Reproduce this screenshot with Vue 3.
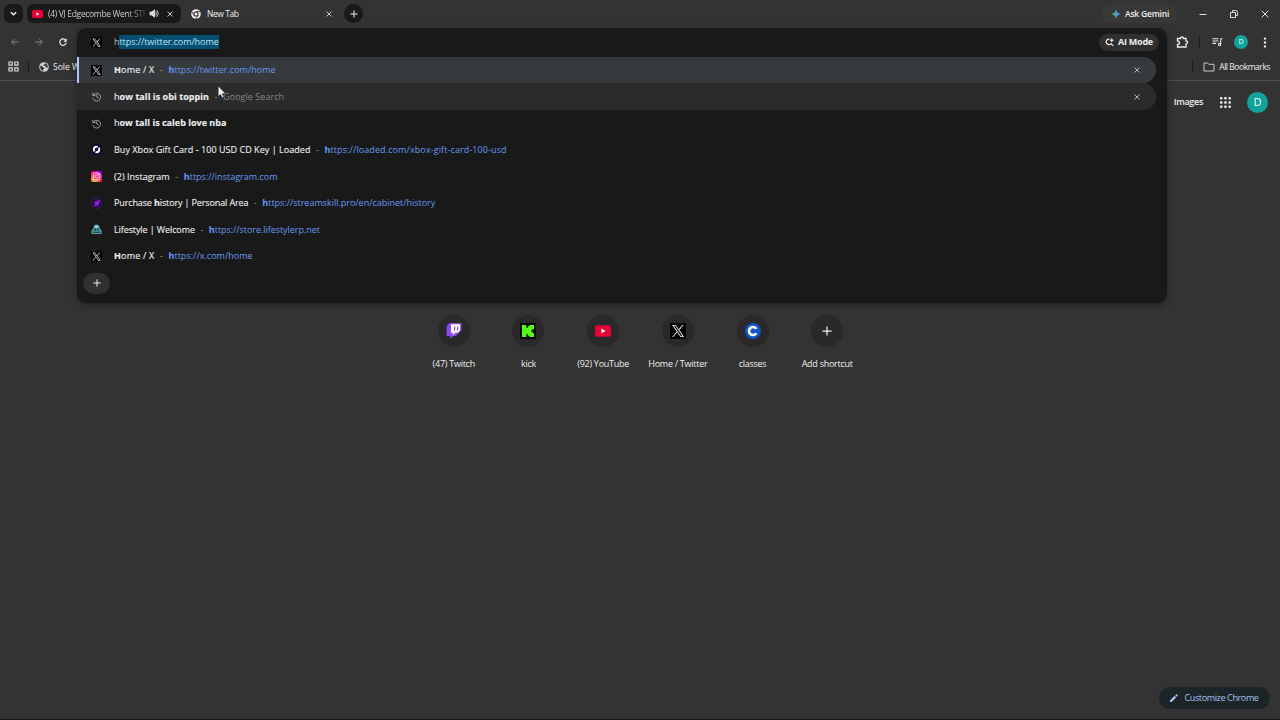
<template>
  <div class="browser">
    <svg class="sprite" aria-hidden="true">
      <symbol id="x" viewBox="0 0 24 24"><path fill="#000" d="M0 0h24v24H0z" /><path fill="#eee" d="M13.9 10.500 20.500 3h-1.700l-5.700 6.500L8.600 3H3.200l6.900 9.900L3.200 21h1.700l6-7.100 4.900 7.100h5.300zM5.700 4.300h2.200l10.800 15.400h-2.200z" /></symbol>
      <symbol id="history" viewBox="0 0 24 24"><path fill="none" stroke="#aaa" stroke-width="2" d="M4 4v6h6M4.6 10a8.5 8.5 0 1 1-.6 5M12.5 7.5V13l4 2.5" /></symbol>
      <symbol id="loaded" viewBox="0 0 24 24"><circle cx="12" cy="12" r="12" fill="#100a35" /><circle cx="12" cy="12" r="6" fill="none" stroke="#fff" stroke-width="4" stroke-dasharray="16.5 2.4" stroke-dashoffset="5" /></symbol>
      <symbol id="instagram" viewBox="0 0 24 24">
        <defs><linearGradient id="ig" x1="0.15" y1="1" x2="0.8" y2="0"><stop offset="0" stop-color="#ffc52e" /><stop offset=".35" stop-color="#ff3b3b" /><stop offset=".7" stop-color="#f00092" /><stop offset="1" stop-color="#b000e8" /></linearGradient></defs>
        <rect width="24" height="24" rx="5" fill="url(#ig)" />
        <rect x="4.5" y="4.5" width="15" height="15" rx="4.5" fill="none" stroke="#fff" stroke-width="2" /><circle cx="12" cy="12" r="3.5" fill="none" stroke="#fff" stroke-width="2" /><circle cx="16.4" cy="7.6" r="1.2" fill="#fff" />
      </symbol>
      <symbol id="streamskill" viewBox="0 0 24 24"><circle cx="12" cy="12" r="11" fill="#220a38" stroke="#5a1890" stroke-width="1.500" /><path fill="#8b22cf" d="m20 3-15 7 4 2.500-3 5 2 1 4-3 2 5 3-6z" /></symbol>
      <symbol id="lifestyle" viewBox="0 0 24 24"><path fill="#4f9fa6" d="M5 10c0-12 14-12 14 0l4 4v8H1v-8z" /><path fill="#b9dde0" d="M8 4h8v3H8z" /><path fill="#142c30" d="M7 11h4v3H7zm6 0h4v3h-4zM4 17h16v2H4z" /></symbol>
      <symbol id="youtube" viewBox="0 0 30 22"><rect width="30" height="22" rx="5" fill="#e80035" /><path fill="#fff" d="m12 6.5 8 4.5-8 4.5z" /></symbol>
      <symbol id="twitch" viewBox="0 0 24 26"><path fill="#8f47f5" d="M5 0 0 5v16h6v5l5-5h4l9-9V0z" /><path fill="#fff" d="M7 2h15v10l-4 4h-4l-4 4v-4H7z" /><path fill="#8f47f5" d="M12 5.5h2V12h-2zm5 0h2V12h-2z" /></symbol>
      <symbol id="kick" viewBox="0 0 24 24"><path fill="#000" d="M0 0h24v24H0z" /><path fill="#53fc18" d="M3 3h6.500v4H12V5h2V3h7v6h-2v2h-2v2h2v2h2v6h-7v-2h-2v-2H9.500v4H3z" /></symbol>
      <symbol id="classes" viewBox="0 0 24 24"><circle cx="12" cy="12" r="12" fill="#0c55c8" /><path fill="none" stroke="#fff" stroke-width="4" d="M17 8.800a6 6 0 1 0 0 6.400" /></symbol>
      <symbol id="plus" viewBox="0 0 24 24"><path fill="none" stroke="#eee" stroke-width="3" d="M12 1v22M1 12h22" /></symbol>
      <symbol id="close" viewBox="0 0 24 24"><path fill="none" stroke="currentColor" stroke-width="3.500" d="m2 2 20 20M22 2 2 22" /></symbol>
      <symbol id="chrome" viewBox="0 0 24 24"><circle cx="12" cy="12" r="11.500" fill="#eee" /><circle cx="12" cy="12" r="5" fill="#eee" stroke="#333" stroke-width="2.500" /><path fill="none" stroke="#333" stroke-width="2" d="M12 6.300h11M7 15 1.500 5.500M17 15l-5.500 9" /></symbol>
      <symbol id="globe" viewBox="0 0 24 24"><circle cx="12" cy="12" r="11.500" fill="#ccc" /><path fill="#333" d="M4 8.500 9 12l3 1v3l-2 1v4C4 20 1.500 14 4 8.500zM14 3v3h-3v3h4l2 4h4c1-4-2-9-7-10z" /></symbol>
      <symbol id="back" viewBox="0 0 24 24"><path fill="none" stroke="#858585" stroke-width="3" d="M23 12H2m10-10L2 12l10 10" /></symbol>
      <symbol id="reload" viewBox="0 0 24 24"><path fill="none" stroke="#eee" stroke-width="3.500" d="M20 7a9.500 9.500 0 1 0 1.500 7" /><path fill="#eee" d="M23 1v10H13z" /></symbol>
    </svg>

    <header class="tabstrip">
      <button class="tab-search"><svg viewBox="0 0 10 10"><path d="m2 3.500 3 3 3-3" /></svg></button>
      <div class="tab inactive">
        <svg class="yt-icon"><use href="#youtube" /></svg>
        <span class="tab-title fade">(4) VJ Edgecombe Went STR</span>
        <svg class="speaker" viewBox="0 0 12 12"><path fill="#ddd" d="M0 4h2.500L6 1v10L2.500 8H0z" /><path d="M7.500 3.500q2 2.500 0 5M9 1.500q4 4.500 0 9" /></svg>
        <svg class="close"><use href="#close" /></svg>
      </div>
      <div class="tab active">
        <svg class="chrome-icon"><use href="#chrome" /></svg>
        <span class="tab-title">New Tab</span>
        <svg class="close"><use href="#close" /></svg>
      </div>
      <button class="new-tab"><svg><use href="#plus" /></svg></button>
      <div class="gemini">
        <svg viewBox="0 0 20 20"><defs><linearGradient id="gm" x1="0" y1=".5" x2="1" y2=".4"><stop offset="0" stop-color="#e7b93c" /><stop offset=".3" stop-color="#4fae72" /><stop offset=".6" stop-color="#4d90f5" /><stop offset="1" stop-color="#7090ff" /></linearGradient></defs><path fill="url(#gm)" d="M10 0q1.500 8.500 10 10-8.500 1.500-10 10Q8.500 11.500 0 10 8.500 8.500 10 0z" /></svg>
        <span>Ask Gemini</span>
      </div>
      <div class="window-buttons">
        <svg viewBox="0 0 10 10"><path d="M1.500 5.500h7" /></svg>
        <svg viewBox="0 0 10 10"><path d="M1.500 3.500h5v5h-5zM3.500 3V1.500h3q2 0 2 2v3H7" /></svg>
        <svg viewBox="0 0 10 10"><path d="m1.700 1.700 6.600 6.600m0-6.600L1.700 8.300" /></svg>
      </div>
    </header>

    <div class="toolbar">
      <svg class="nav"><use href="#back" /></svg>
      <svg class="nav forward"><use href="#back" /></svg>
      <svg class="nav reload"><use href="#reload" /></svg>
      <div class="extensions">
        <svg class="puzzle" viewBox="0 0 24 24"><path d="M3 5h6q0-3 3-3t3 3h5v5q3 0 3 3t-3 3v6H3v-5q4 0 4-3.500T3 10z" /></svg>
        <i class="divider"></i>
        <svg class="media" viewBox="0 0 24 20"><path d="M1 3h13M1 8h13M1 13h8M19 15V3h4" /><circle cx="16.500" cy="15.500" r="2.500" /></svg>
        <span class="avatar small">D</span>
        <svg class="dots" viewBox="0 0 4 14"><circle cx="2" cy="2" r="1.500" /><circle cx="2" cy="7" r="1.500" /><circle cx="2" cy="12" r="1.500" /></svg>
      </div>
    </div>

    <div class="bookmarks">
      <svg class="apps" viewBox="0 0 11 11"><path d="M1 1h3.200v3.200H1zM6.800 1H10v3.200H6.800zM1 6.800h3.200V10H1zM6.800 6.800H10V10H6.800z" /></svg>
      <i class="divider"></i>
      <svg class="globe"><use href="#globe" /></svg>
      <span class="bookmark-name">Sole W</span>
      <div class="all-bookmarks">
        <i class="divider"></i>
        <svg viewBox="0 0 12 10"><path d="M1 1h3.500l1.200 1.300H11V9H1z" /></svg>
        <span>All Bookmarks</span>
      </div>
    </div>

    <main class="page">
      <nav class="google-nav">
        <span>Images</span>
        <svg viewBox="0 0 11 11"><template v-for="r in 3" :key="r"><rect v-for="c in 3" :key="c" :x="(c - 1) * 4.200" :y="(r - 1) * 4.200" width="2.500" height="2.500" rx=".8" /></template></svg>
        <span class="avatar">D</span>
      </nav>
      <div class="shortcuts">
        <div v-for="s in shortcuts" :key="s.name" class="shortcut">
          <div class="bubble"><svg :class="s.icon"><use :href="'#' + s.icon" /></svg></div>
          <span>{{ s.name }}</span>
        </div>
      </div>
      <button class="customize">
        <svg viewBox="0 0 10 10"><path d="M0 10V8l5.700-5.700 2 2L2 10zM6.500 1.500 8 0l2 2-1.500 1.500z" /></svg>
        <span>Customize Chrome</span>
      </button>
    </main>

    <section class="omnibox">
      <div class="omni-input">
        <svg class="favicon"><use href="#x" /></svg>
        <span class="typed">h<mark>ttps://twitter.com/home</mark></span>
        <button class="ai-mode">
          <svg viewBox="0 0 12 12"><path d="M6 1.500a3.700 3.700 0 1 0 2.500 5.600M8 7.500l3 3" /><path class="spark" d="M9 0q.5 2.500 3 3-2.500.500-3 3-.5-2.500-3-3 2.500-.5 3-3z" /></svg>
          <span>AI Mode</span>
        </button>
      </div>
      <div v-for="(r, i) in results" :key="i" class="result" :class="r.state">
        <svg class="favicon"><use :href="'#' + r.icon" /></svg>
        <span class="title" :style="{ letterSpacing: r.ts + 'px' }"><component :is="p.b ? 'b' : 'span'" v-for="(p, j) in r.title" :key="j">{{ p.t }}</component></span>
        <template v-if="r.url || r.note">
          <span class="dash">-</span>
          <span v-if="r.url" class="url" :style="{ letterSpacing: r.us + 'px' }"><b>h</b>{{ r.url }}</span>
          <span v-else class="note">{{ r.note }}</span>
        </template>
        <svg v-if="r.state" class="close"><use href="#close" /></svg>
      </div>
      <button class="add"><svg><use href="#plus" /></svg></button>
    </section>

    <svg class="cursor" viewBox="0 0 8 12"><path d="M.3.300v10L2.600 8.200l1.600 3.400 1.500-.7-1.500-3.300h3.100z" /></svg>
  </div>
</template>

<script setup>
// ts / us: letter spacing of the title and the url
const results = [
  { icon: 'x', state: 'selected', title: [{ t: 'H', b: true }, { t: 'ome / X' }], url: 'ttps://twitter.com/home', ts: .2, us: .02 },
  { icon: 'history', state: 'hovered', title: [{ t: 'h' }, { t: 'ow tall is obi toppin', b: true }], note: 'Google Search', ts: .06 },
  { icon: 'history', title: [{ t: 'h' }, { t: 'ow tall is caleb love nba', b: true }], ts: .01 },
  { icon: 'loaded', title: [{ t: 'Buy Xbox Gift Card - 100 USD CD Key | Loaded' }], url: 'ttps://loaded.com/xbox-gift-card-100-usd', ts: .04, us: .1 },
  { icon: 'instagram', title: [{ t: '(2) Instagram' }], url: 'ttps://instagram.com', ts: .04, us: 0 },
  { icon: 'streamskill', title: [{ t: 'Purchase ' }, { t: 'h', b: true }, { t: 'istory | Personal Area' }], url: 'ttps://streamskill.pro/en/cabinet/history', ts: -.13, us: -.02 },
  { icon: 'lifestyle', title: [{ t: 'Lifestyle | Welcome' }], url: 'ttps://store.lifestylerp.net', ts: -.1, us: -.05 },
  { icon: 'x', title: [{ t: 'H', b: true }, { t: 'ome / X' }], url: 'ttps://x.com/home', ts: .2, us: .02 },
]

const shortcuts = [
  { name: '(47) Twitch', icon: 'twitch' },
  { name: 'kick', icon: 'kick' },
  { name: '(92) YouTube', icon: 'youtube' },
  { name: 'Home / Twitter', icon: 'x' },
  { name: 'classes', icon: 'classes' },
  { name: 'Add shortcut', icon: 'plus' },
]
</script>

<style>
body { margin: 0; background: #333; }
</style>

<style scoped>
.browser { position: relative; width: 1280px; height: 720px; overflow: hidden; display: flex; flex-direction: column; background: #333; color: #eee; font: 9px/12px "Open Sans", "Noto Sans", sans-serif; font-weight: 500; }
.browser * { box-sizing: border-box; }
.sprite { position: absolute; width: 0; height: 0; }
svg { display: block; flex-shrink: 0; overflow: visible; }
button { border: 0; padding: 0; color: inherit; font: inherit; display: flex; align-items: center; justify-content: center; }
b { font-weight: 700; }

.tabstrip { height: 27px; display: flex; align-items: center; padding-left: 4px; flex-shrink: 0; font-size: 8.5px; }
.tab-search { width: 19px; height: 19px; border-radius: 6px; background: #191919; }
.tab-search svg { width: 9px; height: 9px; fill: none; stroke: #eee; stroke-width: 1.6; }
.tab { display: flex; align-items: center; height: 19px; }
.tab .close { width: 6px; height: 6px; color: #ddd; }
.tab-title { white-space: nowrap; letter-spacing: -.45px; }
.inactive { width: 154px; margin-left: 4px; padding: 0 8px 0 5px; border-radius: 6px; background: #191919; color: #ccc; }
.inactive .close { margin-left: auto; }
.yt-icon { width: 11px; height: 8px; margin-right: 5px; }
.fade { width: 97px; letter-spacing: -.33px; -webkit-mask-image: linear-gradient(90deg, #000 82%, rgba(0, 0, 0, .2)); mask-image: linear-gradient(90deg, #000 82%, rgba(0, 0, 0, .2)); }
.speaker { width: 9px; height: 9px; margin-left: 5px; fill: none; stroke: #ddd; stroke-width: 1.2; }
.active { width: 160px; padding: 0 9px 0 10px; }
.active .close { margin-left: auto; }
.chrome-icon { width: 10px; height: 10px; margin-right: 6px; }
.new-tab { width: 19px; height: 19px; margin-left: 3px; border-radius: 50%; background: #191919; }
.new-tab svg { width: 8px; height: 8px; }
.gemini { width: 75px; height: 19px; margin-left: auto; display: flex; align-items: center; gap: 4px; padding-left: 9px; border-radius: 6px; background: #383838; font-weight: 600; letter-spacing: -.2px; white-space: nowrap; }
.gemini svg { width: 10px; height: 10px; }
.window-buttons { display: flex; gap: 21px; margin: 0 10px 0 21px; }
.window-buttons svg { width: 10px; height: 10px; fill: none; stroke: #ddd; stroke-width: 1; }

.toolbar { height: 29px; display: flex; align-items: center; padding: 1px 10px 0 11px; flex-shrink: 0; }
.nav { width: 8px; height: 8px; margin-right: 16px; }
.forward { transform: rotate(180deg); }
.extensions { display: flex; align-items: center; margin-left: auto; }
.puzzle { width: 12px; height: 12px; fill: none; stroke: #eee; stroke-width: 2.6; }
.divider { width: 1px; height: 11px; background: #1c1c1c; }
.extensions .divider { margin: 0 12px 0 11px; }
.media { width: 11px; height: 10px; fill: none; stroke: #eee; stroke-width: 2.2; }
.avatar { width: 21px; height: 21px; border-radius: 50%; background: #0fa39a; color: #fff; display: flex; align-items: center; justify-content: center; font-size: 11px; font-weight: 500; letter-spacing: 0; }
.avatar.small { width: 14px; height: 14px; margin: 0 15px 0 11px; font-size: 7px; }
.dots { width: 4px; height: 11px; margin-right: 3px; fill: #eee; }

.bookmarks { height: 25px; display: flex; align-items: center; padding: 0 10px 3px 8px; border-bottom: 1px solid #4d4d4d; flex-shrink: 0; }
.apps { width: 11px; height: 11px; fill: none; stroke: #ddd; stroke-width: 1.2; }
.bookmarks .divider { margin: 0 10px 0 9px; }
.globe { width: 10px; height: 10px; }
.bookmark-name { margin-left: 4px; font-size: 8.5px; }
.all-bookmarks { display: flex; align-items: center; margin-left: auto; font-size: 8.5px; letter-spacing: -.45px; }
.all-bookmarks svg { width: 12px; height: 10px; margin-right: 4px; fill: none; stroke: #ccc; stroke-width: 1; }

.page { flex: 1; position: relative; display: flex; flex-direction: column; align-items: center; border-bottom: 1px solid #191919; }
.google-nav { align-self: flex-end; display: flex; align-items: center; gap: 17px; height: 42px; padding-right: 12px; font-weight: 600; letter-spacing: -.3px; }
.google-nav > svg { width: 11px; height: 11px; fill: #eee; margin-right: -1px; }
.shortcuts { display: flex; margin-top: 192px; padding-left: 1px; }
.shortcut { width: 74.7px; display: flex; flex-direction: column; align-items: center; gap: 11px; white-space: nowrap; letter-spacing: -.26px; }
.bubble { width: 32px; height: 32px; border-radius: 50%; background: #292929; display: flex; align-items: center; justify-content: center; }
.bubble svg { width: 16px; height: 16px; }
.bubble .youtube { height: 12px; }
.bubble .plus { width: 10px; height: 10px; }
.customize { position: absolute; right: 10px; bottom: 10px; width: 111px; height: 22px; gap: 6px; border-radius: 11px; background: #1d2427; color: #a3c2f5; white-space: nowrap; letter-spacing: -.37px; }
.customize svg { width: 8px; height: 8px; fill: #a3c2f5; }

.omnibox { position: absolute; left: 77px; top: 28px; width: 1090px; height: 275px; border-radius: 9px; background: #191919; box-shadow: 0 2px 6px rgba(0, 0, 0, .35); overflow: hidden; }
.omni-input { height: 28.7px; display: flex; align-items: center; padding: 0 8px 0 14px; }
.favicon { width: 11px; height: 11px; margin-right: 12px; }
.typed { color: #bbb; letter-spacing: -.07px; }
.typed mark { display: inline-block; height: 14px; line-height: 13px; background: #064f72; color: #b9e2f5; }
.ai-mode { margin-left: auto; width: 60px; height: 17px; gap: 4px; border-radius: 9px; background: #303030; font-weight: 700; letter-spacing: -.25px; }
.ai-mode svg { width: 9px; height: 9px; fill: none; stroke: #eee; stroke-width: 1.5; }
.ai-mode .spark { fill: #eee; stroke: none; }
.result { height: 26.65px; width: 1079px; display: flex; align-items: center; padding: 0 16px 0 14px; border-radius: 0 13px 13px 0; white-space: nowrap; }
.selected { background: #363a3c; border-left: 2px solid #a8c7fa; padding-left: 12px; }
.hovered { background: #2b2b2b; }
.title { white-space: pre; -webkit-text-stroke: .12px currentColor; }
.dash { color: #999; width: 14px; text-align: center; }
.url { color: #6698f5; }
.note { color: #858585; letter-spacing: .05px; }
.result .close { width: 6px; height: 6px; margin-left: auto; color: #ccc; }
.add { width: 27px; height: 21px; margin: 3px 0 0 6px; border-radius: 11px; background: #303030; }
.add svg { width: 8px; height: 8px; }
.cursor { position: absolute; left: 218px; top: 86px; width: 8px; height: 12px; fill: #fff; stroke: #222; stroke-width: .4; }
</style>
